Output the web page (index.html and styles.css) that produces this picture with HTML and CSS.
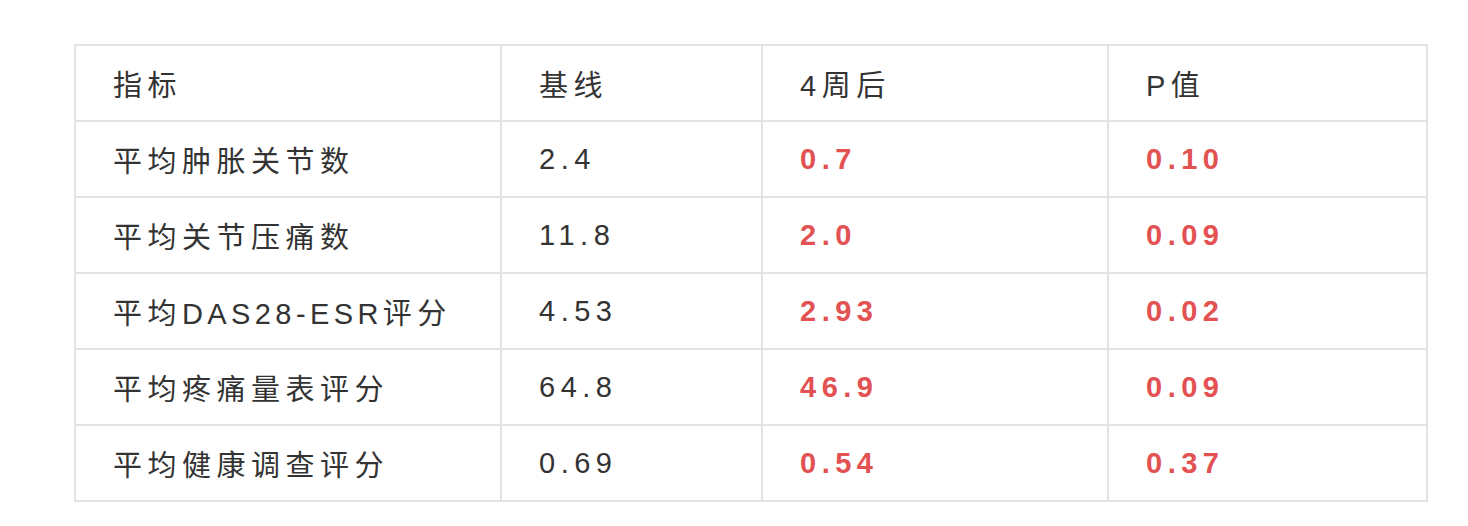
FILE: index.html
```html
<!DOCTYPE html>
<html lang="zh">
<head>
<meta charset="utf-8">
<link rel="stylesheet" href="styles.css">
</head>
<body>
<table class="data">
  <colgroup>
    <col class="c1"><col class="c2"><col class="c3"><col class="c4">
  </colgroup>
  <tr><td>指标</td><td>基线</td><td>4周后</td><td>P值</td></tr>
  <tr><td>平均肿胀关节数</td><td>2.4</td><td class="hl">0.7</td><td class="hl">0.10</td></tr>
  <tr><td>平均关节压痛数</td><td>11.8</td><td class="hl">2.0</td><td class="hl">0.09</td></tr>
  <tr><td>平均<span class="latin">DAS28-ESR</span>评分</td><td>4.53</td><td class="hl">2.93</td><td class="hl">0.02</td></tr>
  <tr><td>平均疼痛量表评分</td><td>64.8</td><td class="hl">46.9</td><td class="hl">0.09</td></tr>
  <tr><td>平均健康调查评分</td><td>0.69</td><td class="hl">0.54</td><td class="hl">0.37</td></tr>
</table>
</body>
</html>
```
FILE: styles.css
```css
html, body {
  margin: 0;
  background: #fff;
}
body {
  padding: 44px 0 0 74px;
  font-family: "Liberation Sans", "Noto Sans CJK SC", sans-serif;
}
.data {
  border-collapse: collapse;
  table-layout: fixed;
  width: 1352px;
}
.c1 { width: 426px; }
.c2 { width: 261px; }
.c3 { width: 346px; }
.c4 { width: 319px; }
.data td {
  border: 2px solid #e3e3e3;
  height: 74px;
  padding: 0 0 0 37px;
  font-size: 29px;
  letter-spacing: 5.5px;
  color: #333;
  vertical-align: middle;
}
.data td.hl {
  color: #e25252;
  font-weight: bold;
}
.latin {
  letter-spacing: 4.4px;
}
```
